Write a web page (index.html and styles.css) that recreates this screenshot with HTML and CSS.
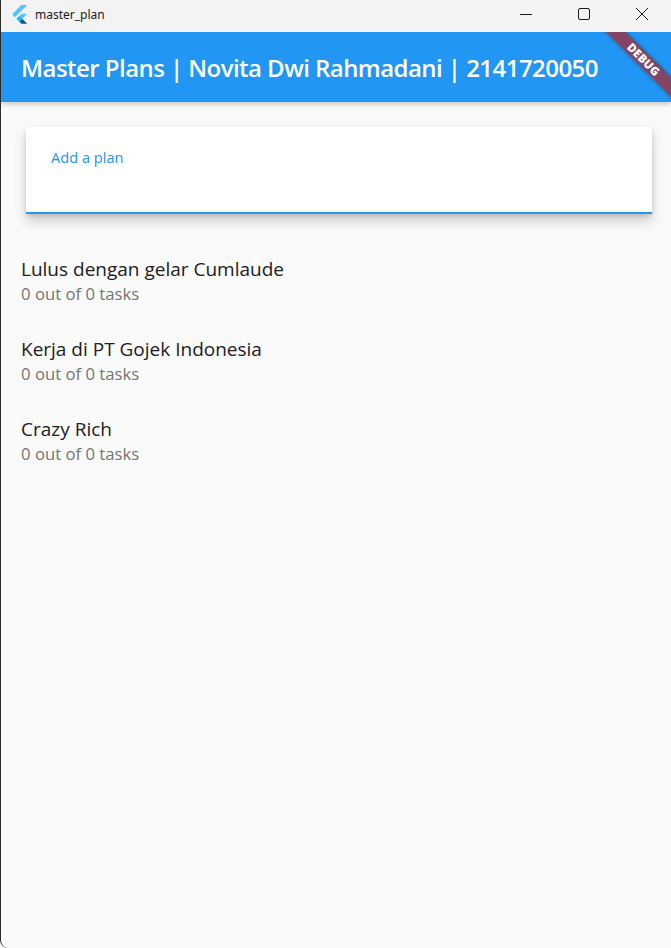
FILE: index.html
```
<!DOCTYPE html>
<html>
<head>
<meta charset="utf-8">
<link rel="stylesheet" href="styles.css">
</head>
<body>
<div class="window">
  <div class="titlebar">
    <div class="tb-left">
      <svg class="flutter-logo" width="16" height="19" viewBox="0 0 166 202">
        <path fill="#54C5F8" d="M98.6 0L0 98.6l30.5 30.5L159.6 0z"/>
        <path fill="#54C5F8" d="M98.6 93.5L45.7 146.3l30.5 30.5 83.4-83.3z"/>
        <path fill="#01579B" d="M76.2 176.8l23.2 23.2h60.2l-53.3-53.3z"/>
        <path fill="#29B6F6" d="M45.7 146.3l30.5-30.5 30.5 30.5-30.5 30.5z"/>
      </svg>
      <span class="tb-title">master_plan</span>
    </div>
    <div class="tb-controls">
      <div class="tb-btn">
        <svg width="14" height="14" viewBox="0 0 14 14"><path d="M1 7.5h12" stroke="#1a1a1a" stroke-width="1"/></svg>
      </div>
      <div class="tb-btn">
        <svg width="14" height="14" viewBox="0 0 14 14"><rect x="1.5" y="1.5" width="11" height="11" rx="1.5" fill="none" stroke="#1a1a1a" stroke-width="1"/></svg>
      </div>
      <div class="tb-btn">
        <svg width="14" height="14" viewBox="0 0 14 14"><path d="M1 1l12 12M13 1L1 13" stroke="#1a1a1a" stroke-width="1"/></svg>
      </div>
    </div>
  </div>
  <div class="app">
    <header class="appbar">
      <h1 class="appbar-title">Master Plans | Novita Dwi Rahmadani | 2141720050</h1>
    </header>
    <main class="content">
      <div class="card">
        <label class="field-label">Add a plan</label>
        <div class="field-line"></div>
      </div>
      <ul class="plan-list">
        <li class="plan-tile">
          <div class="plan-title">Lulus dengan gelar Cumlaude</div>
          <div class="plan-sub">0 out of 0 tasks</div>
        </li>
        <li class="plan-tile">
          <div class="plan-title">Kerja di PT Gojek Indonesia</div>
          <div class="plan-sub">0 out of 0 tasks</div>
        </li>
        <li class="plan-tile">
          <div class="plan-title">Crazy Rich</div>
          <div class="plan-sub">0 out of 0 tasks</div>
        </li>
      </ul>
    </main>
    <div class="debug-anchor">
      <div class="debug-banner">DEBUG</div>
    </div>
  </div>
</div>
</body>
</html>
```
FILE: styles.css
```
* { box-sizing: border-box; }
html, body {
  margin: 0;
  padding: 0;
  background: #fafafa;
}
body {
  font-family: "Open Sans", "Noto Sans", sans-serif;
  width: 671px;
  height: 948px;
  overflow: hidden;
}
.window {
  width: 671px;
  height: 948px;
  border-left: 1px solid #2b2b2b;
  border-bottom-left-radius: 8px;
  background: #fafafa;
  display: flex;
  flex-direction: column;
  overflow: hidden;
}
.titlebar {
  height: 32px;
  flex: none;
  background: #f3f3f3;
  display: flex;
  align-items: center;
  justify-content: space-between;
}
.tb-left {
  display: flex;
  align-items: center;
  padding-left: 11px;
  height: 100%;
}
.flutter-logo {
  margin-top: -4px;
}
.tb-title {
  font-family: "Noto Sans", "Open Sans", sans-serif;
  font-size: 12px;
  color: #1a1a1a;
  margin-left: 7px;
  margin-top: -4px;
}
.tb-controls {
  display: flex;
  height: 100%;
  align-self: flex-start;
}
.tb-btn {
  width: 58px;
  height: 27px;
  display: flex;
  align-items: center;
  justify-content: center;
}
.tb-btn svg { display: block; }
.app {
  flex: 1;
  position: relative;
  overflow: hidden;
  display: flex;
  flex-direction: column;
}
.appbar {
  height: 70px;
  flex: none;
  background: #2196f3;
  box-shadow: 0 2px 5px rgba(0,0,0,0.22);
  display: flex;
  align-items: center;
  padding-left: 20px;
  position: relative;
  z-index: 1;
}
.appbar-title {
  margin: 0;
  color: #fff;
  font-size: 24px;
  font-weight: 600;
  letter-spacing: -0.55px;
  white-space: nowrap;
}
.content {
  flex: 1;
  padding-top: 25px;
}
.card {
  margin: 0 19px 0 25px;
  height: 87px;
  background: #fff;
  box-shadow: 0 7px 12px rgba(0,0,0,0.18), 0 2px 4px rgba(0,0,0,0.12);
  display: flex;
  flex-direction: column;
  justify-content: space-between;
}
.field-label {
  font-size: 14.6px;
  color: #2196f3;
  padding: 20px 0 0 25px;
  line-height: 20px;
}
.field-line {
  height: 2.5px;
  background: #2196f3;
}
.plan-list {
  list-style: none;
  margin: 0;
  padding: 26px 0 0 0;
}
.plan-tile {
  height: 80px;
  padding: 0 20px;
  display: flex;
  flex-direction: column;
  justify-content: center;
}
.plan-title {
  font-size: 19px;
  line-height: 27px;
  color: #212121;
}
.plan-sub {
  font-size: 16.7px;
  line-height: 22px;
  color: #757575;
}
.debug-anchor {
  position: absolute;
  top: 0;
  right: 0;
  width: 0;
  height: 0;
  z-index: 5;
}
.debug-banner {
  position: absolute;
  left: -50px;
  top: 32px;
  width: 100px;
  height: 14px;
  transform-origin: 50px -32px;
  transform: rotate(45deg);
  background: rgba(183, 28, 28, 0.66);
  box-shadow: 0 0 4px rgba(0,0,0,0.4);
  color: #fff;
  font-family: "Open Sans", sans-serif;
  font-weight: 800;
  font-size: 11.5px;
  line-height: 14px;
  text-align: center;
  letter-spacing: 0.2px;
}
```
